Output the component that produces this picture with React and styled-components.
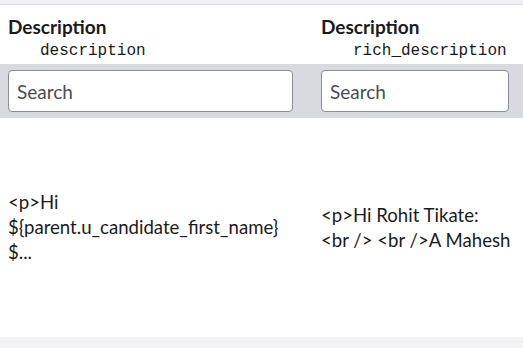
import * as React from "react"
import styled, { createGlobalStyle } from "styled-components"

const GlobalStyle = createGlobalStyle`
  body {
    margin: 0;
    background: #fff;
    font-family: Lato, "Noto Sans", sans-serif;
    color: #1f1f22;
  }
`

const Table = styled.div`
  width: 523px;
  height: 348px;
  overflow: hidden;
  display: grid;
  grid-template-columns: 307px 216px;
  grid-template-rows: 5px 59px 54px 219px 11px;
`

const TopStrip = styled.div`
  grid-column: 1 / -1;
  background: #f1f1f3;
  border-bottom: 1px solid #dedee2;
`

const HeaderCell = styled.div`
  padding: ${(p) => (p.$first ? "9px 14px 0 8px" : "9px 14px 0 14px")};
  background: #fff;
`

const Title = styled.div`
  font-weight: 700;
  font-size: 19px;
  line-height: 25px;
  color: #1a1a1d;
`

const FieldName = styled.div`
  font-family: "Liberation Mono", monospace;
  font-size: 16px;
  line-height: 21px;
  margin: 2px 0 0 32px;
  color: #1a1a1d;
`

const FilterCell = styled.div`
  background: #d9dadf;
  display: flex;
  align-items: center;
  padding: ${(p) => (p.$first ? "0 14px 0 8px" : "0 14px")};
`

const SearchInput = styled.input`
  box-sizing: border-box;
  width: 100%;
  height: 42px;
  border: 1.5px solid #8b8e95;
  border-radius: 4px;
  background: #fff;
  padding: 0 8px;
  font-family: Lato, "Noto Sans", sans-serif;
  font-size: 19px;
  color: #222;
  outline: none;

  &::placeholder {
    color: #4a4c52;
  }
`

const BodyCell = styled.div`
  display: flex;
  flex-direction: column;
  justify-content: center;
  padding: ${(p) => (p.$first ? "0 14px 0 8px" : "0 0 0 14px")};
  font-size: 18.6px;
  line-height: 25px;
  color: #1a1a1d;
`

const Line = styled.span`
  display: block;
  white-space: nowrap;
`

const Footer = styled.div`
  grid-column: 1 / -1;
  background: #f3f3f5;
`

const columns = [
  {
    title: "Description",
    field: "description",
    lines: ["<p>Hi", "${parent.u_candidate_first_name}", "$..."],
  },
  {
    title: "Description",
    field: "rich_description",
    lines: ["<p>Hi Rohit Tikate:", "<br /> <br />A Mahesh"],
  },
]

export default function App() {
  return (
    <>
      <GlobalStyle />
      <Table>
        <TopStrip />
        {columns.map((c, i) => (
          <HeaderCell key={"h" + i} $first={i === 0}>
            <Title>{c.title}</Title>
            <FieldName>{c.field}</FieldName>
          </HeaderCell>
        ))}
        {columns.map((c, i) => (
          <FilterCell key={"f" + i} $first={i === 0}>
            <SearchInput placeholder="Search" />
          </FilterCell>
        ))}
        {columns.map((c, i) => (
          <BodyCell key={"b" + i} $first={i === 0}>
            {c.lines.map((l, j) => (
              <Line key={j}>{l}</Line>
            ))}
          </BodyCell>
        ))}
        <Footer />
      </Table>
    </>
  )
}
